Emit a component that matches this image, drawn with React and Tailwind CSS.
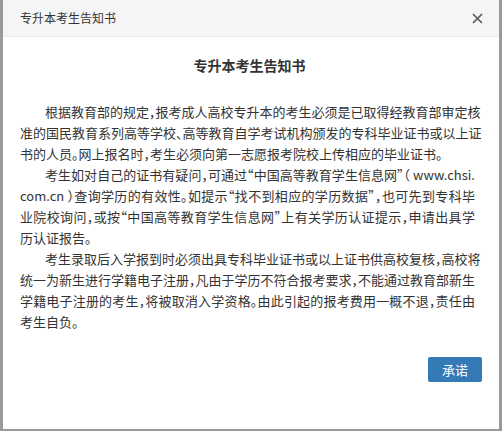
import React from "react";

// each paragraph split the way the notice wraps; first line indented, last line left-aligned
const paragraphs = [
  [
    "根据教育部的规定，报考成人高校专升本的考生必须是已取得经教育部审定核",
    "准的国民教育系列高等学校、高等教育自学考试机构颁发的专科毕业证书或以上证",
    "书的人员。网上报名时，考生必须向第一志愿报考院校上传相应的毕业证书。",
  ],
  [
    "考生如对自己的证书有疑问，可通过“中国高等教育学生信息网”（ www.chsi.",
    "com.cn ）查询学历的有效性。如提示“找不到相应的学历数据”，也可先到专科毕",
    "业院校询问，或按“中国高等教育学生信息网”上有关学历认证提示，申请出具学",
    "历认证报告。",
  ],
  [
    "考生录取后入学报到时必须出具专科毕业证书或以上证书供高校复核，高校将",
    "统一为新生进行学籍电子注册，凡由于学历不符合报考要求，不能通过教育部新生",
    "学籍电子注册的考生，将被取消入学资格。由此引起的报考费用一概不退，责任由",
    "考生自负。",
  ],
];

function App() {
  return (
    <div
      className="w-[502px] h-[431px] bg-[#9a9a9a] pl-[3px] pr-[3px] pb-[2px] overflow-hidden"
      style={{ fontFamily: '"Noto Sans CJK SC", "Liberation Sans", sans-serif' }}
    >
      <div className="h-full bg-white flex flex-col">
        {/* Header */}
        <div className="h-[37px] bg-[#f5f5f5] border-b border-[#e8e8e8] flex items-center justify-between pl-[17px] pr-[14px]">
          <span className="text-[12px] text-[#333]">专升本考生告知书</span>
          <button className="w-[16px] h-[16px] flex items-center justify-center">
            <svg width="11" height="11" viewBox="0 0 11 11">
              <path d="M1 1L10 10M10 1L1 10" stroke="#555" strokeWidth="1.6" />
            </svg>
          </button>
        </div>

        {/* Body */}
        <div className="flex-1 pl-[17px] pr-[20px]">
          <h3 className="text-[14px] font-bold text-[#333] text-center mt-[18px] leading-[20px]">
            专升本考生告知书
          </h3>
          <div className="mt-[26px] w-[455px] text-[13px] leading-[21px] text-[#333] [font-feature-settings:'halt']">
            {paragraphs.map((lines, i) => (
              <div key={i}>
                {lines.map((line, j) => (
                  <div
                    key={j}
                    className={`whitespace-nowrap ${j === 0 ? "pl-[25px]" : ""} ${
                      j === lines.length - 1 ? "text-left" : "text-justify [text-align-last:justify]"
                    }`}
                  >
                    {line}
                  </div>
                ))}
              </div>
            ))}
          </div>
          <div className="flex justify-end mt-[25px]">
            <button className="w-[54px] h-[25px] bg-[#337ab7] text-white text-[13px] rounded-[2px] mr-[-3px]">
              承诺
            </button>
          </div>
        </div>
      </div>
    </div>
  );
}

export default App;
